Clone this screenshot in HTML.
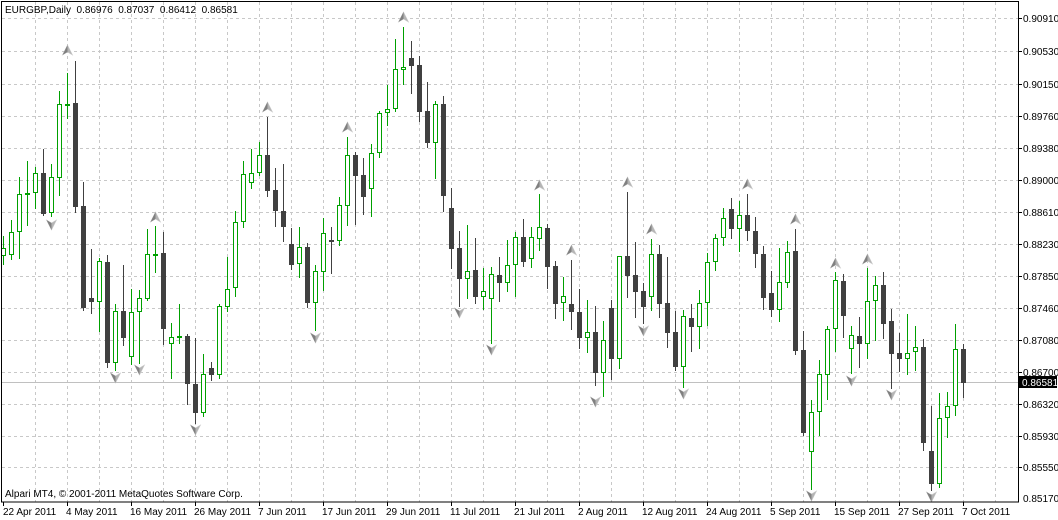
<!DOCTYPE html>
<html><head><meta charset="utf-8"><style>
html,body{margin:0;padding:0;background:#fff;width:1058px;height:520px;overflow:hidden}
svg{display:block}
text{font-family:"Liberation Sans",sans-serif;font-size:10px;fill:#000}
</style></head><body>
<svg id="s" width="1058" height="520" xmlns="http://www.w3.org/2000/svg">
<rect width="1058" height="520" fill="#fff"/>
<g id="grid" stroke="#c8c8c8" stroke-dasharray="3,3" stroke-width="1"></g>
<line x1="2" y1="382.5" x2="1018" y2="382.5" stroke="#c0c0c0"/>
<g id="c"></g>
<g id="ar"></g>
<rect x="1.5" y="1.5" width="1017" height="500.5" fill="none" stroke="#000"/>
<g id="ticks" stroke="#000"></g>
<text x="5" y="13" xml:space="preserve">EURGBP,Daily  0.86976  0.87037  0.86412  0.86581</text>
<text x="5" y="497">Alpari MT4, © 2001-2011 MetaQuotes Software Corp.</text>
<g id="pl">
<text x="1023" y="22">0.90910</text><text x="1023" y="55">0.90530</text><text x="1023" y="88">0.90150</text>
<text x="1023" y="120">0.89760</text><text x="1023" y="152">0.89380</text><text x="1023" y="184">0.89000</text>
<text x="1023" y="216">0.88610</text><text x="1023" y="248">0.88230</text><text x="1023" y="280">0.87850</text>
<text x="1023" y="312">0.87460</text><text x="1023" y="344">0.87080</text><text x="1023" y="376">0.86700</text>
<text x="1023" y="408">0.86320</text><text x="1023" y="440">0.85930</text><text x="1023" y="471">0.85550</text>
<text x="1023" y="502">0.85170</text>
</g>
<rect x="1019" y="376" width="38" height="12" fill="#000"/>
<text x="1022" y="386" style="fill:#fff">0.86581</text>
<text x="3" y="515">22 Apr 2011</text><text x="66" y="515">4 May 2011</text><text x="130" y="515">16 May 2011</text>
<text x="194" y="515">26 May 2011</text><text x="258" y="515">7 Jun 2011</text><text x="322" y="515">17 Jun 2011</text>
<text x="386" y="515">29 Jun 2011</text><text x="450" y="515">11 Jul 2011</text><text x="514" y="515">21 Jul 2011</text>
<text x="578" y="515">2 Aug 2011</text><text x="642" y="515">12 Aug 2011</text><text x="706" y="515">24 Aug 2011</text>
<text x="770" y="515">5 Sep 2011</text><text x="834" y="515">15 Sep 2011</text><text x="898" y="515">27 Sep 2011</text>
<text x="962" y="515">7 Oct 2011</text>
</svg>
<script>
var NS="http://www.w3.org/2000/svg";
function el(p,n,a){var e=document.createElementNS(NS,n);for(var k in a)e.setAttribute(k,a[k]);p.appendChild(e);return e;}
var g=document.getElementById('grid'),tk=document.getElementById('ticks');
var hy=[18,51,84,116,148,180,212,244,276,308,340,372,404,436,467];
hy.forEach(function(y){el(g,'line',{x1:2,y1:y+.5,x2:1018,y2:y+.5});el(tk,'line',{x1:1018,y1:y+.5,x2:1022,y2:y+.5});});
for(var k=1;k<=31;k++){var x=3+32*k+.5;if(x<1018)el(g,'line',{x1:x,y1:2,x2:x,y2:502});}
for(var k=0;k<16;k++){var x=3+64*k+.5;el(tk,'line',{x1:x,y1:502,x2:x,y2:506});}
var D=[
[236,248,256,264,1],[220,232,255,259,1],[177,194,232,258,1],[161,193,195,225,1],[167,173,193,208,1],
[149,173,214,215,0],[164,177,213,216,1],[91,104,178,195,1],[73,104,106,118,1],[61,103,207,212,0],
[182,206,308,310,0],[249,298,302,313,0],[258,261,302,331,1],[255,262,363,367,0],[304,311,363,370,1],
[265,311,338,345,0],[289,312,357,364,1],[290,298,312,363,1],[229,254,299,300,1],[226,254,256,272,1],
[232,253,329,344,0],[323,337,344,378,1],[304,336,338,343,1],[334,336,384,404,0],[338,384,413,423,0],
[354,374,413,416,1],[362,368,375,380,0],[304,306,375,378,1],[257,289,307,311,1],[211,222,288,296,1],
[161,174,222,227,1],[149,173,183,188,1],[142,155,173,175,1],[117,155,191,196,0],[168,190,211,226,0],
[164,211,227,241,0],[228,244,265,269,0],[227,247,264,277,1],[243,247,303,307,0],[265,271,303,330,1],
[218,233,272,290,1],[227,240,242,273,0],[197,205,241,245,1],[137,155,206,225,1],[152,155,176,224,0],
[158,175,197,214,0],[144,153,189,216,1],[111,113,153,157,1],[85,109,113,125,1],[39,69,109,111,1],
[27,67,70,84,1],[41,58,66,93,0],[56,65,112,121,0],[82,111,143,147,0],[101,104,143,178,1],
[96,104,196,211,0],[188,208,249,268,0],[231,248,279,306,0],[225,271,279,298,1],[238,270,297,303,0],
[268,291,297,309,1],[267,274,299,343,1],[257,275,283,301,0],[240,265,283,291,1],[232,237,265,296,1],
[219,237,262,266,0],[227,237,259,267,1],[194,227,239,250,1],[224,228,267,288,0],[261,266,304,318,0],
[277,296,303,320,1],[260,304,312,329,0],[289,312,338,348,0],[300,332,338,352,1],[306,332,373,385,0],
[321,340,373,396,1],[300,308,359,379,0],[256,256,359,368,1],[192,256,276,297,0],[242,275,292,317,0],
[283,291,307,323,0],[239,254,297,310,1],[245,254,304,317,0],[257,303,333,347,0],[311,332,367,370,0],
[310,316,367,387,1],[304,318,327,351,0],[290,303,327,348,1],[253,262,303,325,1],[234,238,262,270,1],
[208,218,238,245,1],[198,209,229,238,0],[201,215,229,251,1],[194,215,231,240,0],[217,231,254,267,0],
[246,254,298,309,0],[271,293,310,316,0],[248,282,310,321,1],[241,252,283,287,1],[229,251,351,354,0],
[331,350,433,435,0],[400,412,452,489,1],[360,374,412,435,1],[326,329,375,399,1],[272,280,329,351,1],
[274,281,316,337,0],[326,335,349,373,1],[317,336,344,367,0],[268,301,344,358,1],[276,285,301,340,1],
[272,285,324,338,0],[309,321,354,388,0],[333,353,359,371,0],[314,353,359,374,1],[326,347,352,370,1],
[339,347,443,450,0],[406,451,484,490,0],[393,418,484,487,1],[392,406,418,437,1],[324,349,406,415,1],
[344,349,383,397,0]];
var c=document.getElementById('c');
D.forEach(function(d,i){
 var cx=3+8*i, wx=cx+.5, col=d[4]?'#00a000':'#404040';
 el(c,'line',{x1:wx,y1:d[0],x2:wx,y2:d[3]+1,stroke:col});
 var h=Math.max(d[2]-d[1],1);
 if(d[4]) el(c,'rect',{x:cx-1.5,y:d[1]+.5,width:4,height:Math.max(h-1,0.5),fill:'#fff',stroke:col});
 else el(c,'rect',{x:cx-2,y:d[1],width:5,height:Math.max(h,2),fill:col});
});
var A=[[8,50,1],[6,225,0],[14,378,0],[17,370,0],[19,217,1],[24,430,0],[33,107,1],[39,338,0],[43,127,1],
[50,17,1],[57,313,0],[61,350,0],[67,185,1],[71,250,1],[74,402,0],[78,182,1],[80,331,0],[81,229,1],
[85,394,0],[93,184,1],[99,219,1],[104,263,1],[108,259,1],[101,496,0],[106,381,0],[111,395,0],[116,497,0]];
var ar=document.getElementById('ar');
A.forEach(function(a){
 var x=3.5+8*a[0],y=a[1],s=a[2]?1:-1;
 el(ar,'polygon',{points:[x,y-5*s, x+5,y+5*s, x,y+2*s, x-5,y+5*s].join(' '),fill:'#b4b4b4',stroke:'#c8c8c8','stroke-width':.6});
 el(ar,'polygon',{points:[x,y-5*s, x,y+2*s, x-5,y+5*s].join(' '),fill:'#808080'});
});
</script>
</body></html>
